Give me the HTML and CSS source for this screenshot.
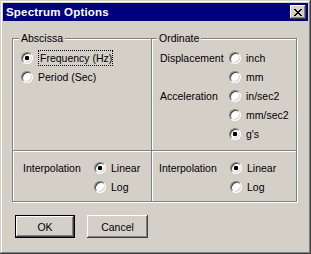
FILE: index.html
```html
<!DOCTYPE html>
<html lang="en">
<head>
    <meta charset="UTF-8">
    <title>Spectrum Options</title>
    <link rel="stylesheet" href="styles.css">
</head>
<body>
    <div class="window">
        <div class="titlebar">
            <span class="title">Spectrum Options</span>
            <button class="close" type="button" aria-label="Close">
                <svg width="8" height="7" viewBox="0 0 8 7" shape-rendering="crispEdges">
                    <path d="M0 0h2v1h-2z M6 0h2v1h-2z M1 1h2v1h-2z M5 1h2v1h-2z M2 2h4v1h-4z M3 3h2v1h-2z M2 4h4v1h-4z M1 5h2v1h-2z M5 5h2v1h-2z M0 6h2v1h-2z M6 6h2v1h-2z" fill="#000"/>
                </svg>
            </button>
        </div>

        <div class="content">
            <div class="groups">
                <!-- Abscissa -->
                <div class="cell top-left">
                    <span class="legend">Abscissa</span>
                    <div class="rows">
                        <label class="row">
                            <input type="radio" class="radio" name="abscissa" checked>
                            <span class="focus">Frequency (Hz)</span>
                        </label>
                        <label class="row">
                            <input type="radio" class="radio" name="abscissa">
                            <span class="text">Period (Sec)</span>
                        </label>
                    </div>
                </div>

                <!-- Ordinate -->
                <div class="cell top-right">
                    <span class="legend">Ordinate</span>
                    <div class="grid">
                        <span class="name">Displacement</span>
                        <label class="row"><input type="radio" class="radio" name="ordinate"><span class="text">inch</span></label>
                        <span class="name"></span>
                        <label class="row"><input type="radio" class="radio" name="ordinate"><span class="text">mm</span></label>
                        <span class="name">Acceleration</span>
                        <label class="row"><input type="radio" class="radio" name="ordinate"><span class="text">in/sec2</span></label>
                        <span class="name"></span>
                        <label class="row"><input type="radio" class="radio" name="ordinate"><span class="text">mm/sec2</span></label>
                        <span class="name"></span>
                        <label class="row"><input type="radio" class="radio" name="ordinate" checked><span class="text">g's</span></label>
                    </div>
                </div>

                <!-- Interpolation, abscissa side -->
                <div class="cell bottom-left">
                    <div class="grid interp">
                        <span class="name">Interpolation</span>
                        <label class="row"><input type="radio" class="radio" name="interp-x" checked><span class="text">Linear</span></label>
                        <span class="name"></span>
                        <label class="row"><input type="radio" class="radio" name="interp-x"><span class="text">Log</span></label>
                    </div>
                </div>

                <!-- Interpolation, ordinate side -->
                <div class="cell bottom-right">
                    <div class="grid interp">
                        <span class="name">Interpolation</span>
                        <label class="row"><input type="radio" class="radio" name="interp-y" checked><span class="text">Linear</span></label>
                        <span class="name"></span>
                        <label class="row"><input type="radio" class="radio" name="interp-y"><span class="text">Log</span></label>
                    </div>
                </div>
            </div>

            <div class="buttons">
                <button type="button" class="btn default">OK</button>
                <button type="button" class="btn cancel">Cancel</button>
            </div>
        </div>
    </div>
</body>
</html>
```

FILE: styles.css
```css
body {
    margin: 0;
    padding: 0;
    font-family: "Liberation Sans", Arial, sans-serif;
    font-size: 10.5px;
    color: #000;
    background-color: #d4d0c8;
}
.window {
    box-sizing: border-box;
    width: 311px;
    height: 254px;
    padding: 3px;
    background-color: #d4d0c8;
    box-shadow: inset -1px -1px #404040, inset 1px 1px #d4d0c8, inset -2px -2px #808080, inset 2px 2px #fff;
}
.titlebar {
    display: flex;
    align-items: center;
    justify-content: space-between;
    height: 18px;
    padding: 0 2px 0 3px;
    background-color: #000080;
}
.title {
    color: #fff;
    font-weight: bold;
    font-size: 11.5px;
    letter-spacing: 0.2px;
}
.close {
    box-sizing: border-box;
    display: flex;
    align-items: center;
    justify-content: center;
    width: 16px;
    height: 14px;
    padding: 0;
    border: none;
    background-color: #d4d0c8;
    box-shadow: inset -1px -1px #404040, inset 1px 1px #fff, inset -2px -2px #808080, inset 2px 2px #d4d0c8;
}
.close svg {
    display: block;
    margin-left: -1px;
}
.content {
    padding: 17px 0 0 9px;
}
.groups {
    display: grid;
    grid-template-columns: 138px 145px;
    grid-template-rows: 111px 51px;
    width: 283px;
    border: 1px solid #808080;
    box-shadow: inset 1px 1px #fff, 1px 1px #fff;
}
.cell {
    position: relative;
    box-sizing: border-box;
}
.top-right, .bottom-right {
    border-left: 1px solid #808080;
    box-shadow: inset 1px 0 #fff;
}
.bottom-left, .bottom-right {
    border-top: 1px solid #808080;
}
.bottom-left {
    box-shadow: inset 0 1px #fff;
}
.bottom-right {
    box-shadow: inset 1px 1px #fff;
}
.legend {
    position: absolute;
    top: -8px;
    left: 6px;
    padding: 0 2px;
    line-height: 14px;
    background-color: #d4d0c8;
}
.top-right .legend {
    left: 5px;
}
.rows {
    display: flex;
    flex-direction: column;
    padding: 9px 0 0 8px;
}
.row {
    display: flex;
    align-items: center;
    height: 19px;
}
.radio {
    appearance: none;
    -webkit-appearance: none;
    box-sizing: border-box;
    width: 12px;
    height: 12px;
    margin: 0 4px 0 0;
    border-radius: 50%;
    border: 1px solid;
    border-color: #808080 #fff #fff #808080;
    background-color: #fff;
    box-shadow: inset 1px 1px #404040, inset -1px -1px #d4d0c8;
    flex-shrink: 0;
}
.radio:checked {
    background-image: radial-gradient(circle, #000 0, #000 2px, #fff 2.6px);
}
.text {
    padding-left: 1px;
}
.focus {
    display: inline-block;
    padding: 1px 0 1px 1px;
    margin-left: 1px;
    border: 1px dotted #000;
    line-height: 12px;
    white-space: nowrap;
}
.grid {
    display: grid;
    grid-template-columns: 69px auto;
    padding: 9px 0 0 8px;
}
.name {
    display: flex;
    align-items: center;
    height: 19px;
    white-space: nowrap;
}
.interp {
    grid-template-columns: 71px auto;
    padding: 7px 0 0 10px;
}
.bottom-right .interp {
    padding-left: 7px;
}
.buttons {
    display: flex;
    gap: 12px;
    margin-top: 13px;
    padding-left: 3px;
}
.btn {
    box-sizing: border-box;
    width: 60px;
    height: 23px;
    padding: 0;
    border: none;
    font-family: "Liberation Sans", Arial, sans-serif;
    font-size: 10.5px;
    color: #000;
    background-color: #d4d0c8;
    box-shadow: inset -1px -1px #404040, inset 1px 1px #fff, inset -2px -2px #808080, inset 2px 2px #d4d0c8;
}
.btn.default {
    border: 1px solid #000;
}
.btn.cancel {
    width: 61px;
}
```
